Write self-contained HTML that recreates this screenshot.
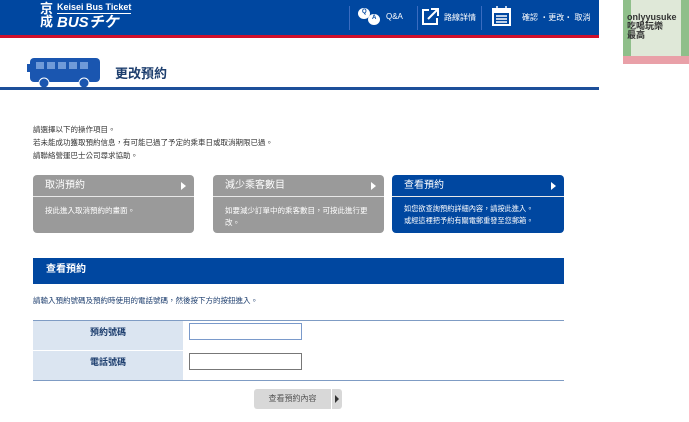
<!DOCTYPE html><html><head><meta charset="utf-8"><style>
body{margin:0;width:689px;height:422px;background:#fff;position:relative;overflow:hidden;font-family:"Liberation Sans","Noto Sans CJK TC",sans-serif;color:#333}
.a{position:absolute}
.hdr{left:0;top:0;width:599px;height:35px;background:#0047a0}
.red{left:0;top:35px;width:599px;height:3px;background:#d0102b}
.nav{color:#fff;font-size:8px}
.vl{width:1px;height:24px;top:6px;background:#3a6cc0}
.card{border-radius:4px;color:#fff;overflow:hidden}
.card .h{height:21px;border-bottom:1px solid #e8e8e8;font-size:10px;line-height:21px;padding-left:12px;position:relative}
.card .h:after{content:"";position:absolute;right:8px;top:7px;border-left:5px solid #fff;border-top:4px solid transparent;border-bottom:4px solid transparent}
.card .b{font-size:7.5px;padding:8px 12px;line-height:12px}
.g{background:#9a9a9a}.bl{background:#0047a0}
.lab{background:#dbe5f1;font-size:9px;font-weight:bold;color:#1d3e6e;text-align:center;box-sizing:border-box;padding-top:4px}
input{position:absolute;border:1px solid #777;height:15px;width:111px;padding:0;margin:0}
</style></head><body>
<div class="a hdr"></div><div class="a red"></div>
<div class="a" style="left:40px;top:2px;color:#fff;font-weight:bold;font-size:13px;line-height:13px">京<br>成</div>
<div class="a" style="left:57px;top:2px;color:#fff;font-size:9px;font-weight:bold;border-bottom:1px solid #fff;line-height:11px">Keisei Bus Ticket</div>
<div class="a" style="left:57px;top:15px;color:#fff;font-size:15px;font-weight:bold;font-style:italic;line-height:15px">BUSチケ</div>
<div class="a vl" style="left:349px"></div><div class="a vl" style="left:417px"></div><div class="a vl" style="left:481px"></div>
<div class="a" style="left:358px;top:8px;width:12px;height:11px;border-radius:50%;background:#fff"></div>
<div class="a" style="left:368px;top:14px;width:12px;height:11px;border-radius:50%;background:#fff"></div>
<div class="a" style="left:362px;top:9px;font-size:6px;font-weight:bold;color:#0047a0">Q</div>
<div class="a" style="left:372px;top:15px;font-size:6px;font-weight:bold;color:#0047a0">A</div>
<div class="a nav" style="left:386px;top:12px">Q&amp;A</div>
<svg class="a" style="left:420px;top:7px" width="20" height="20"><path d="M9 3H3v14h14v-6" fill="none" stroke="#fff" stroke-width="2"/><path d="M8 12L17 3M11 2h7v7" fill="none" stroke="#fff" stroke-width="2"/></svg>
<div class="a nav" style="left:444px;top:12px">路線詳情</div>
<svg class="a" style="left:492px;top:6px" width="19" height="20"><rect x="1" y="3" width="17" height="16" fill="none" stroke="#fff" stroke-width="2"/><rect x="1" y="3" width="17" height="4" fill="#fff"/><path d="M5 0v5M14 0v5M4 10h11M4 13h11M4 16h11" stroke="#fff" stroke-width="1.5"/></svg>
<div class="a nav" style="left:522px;top:12px">確認 ・更改・ 取消</div>
<div class="a" style="left:623px;top:0;width:66px;height:64px;background:#dfe8d8"></div>
<div class="a" style="left:623px;top:0;width:8px;height:64px;background:#8fbf8a"></div>
<div class="a" style="left:681px;top:0;width:8px;height:64px;background:#8fbf8a"></div>
<div class="a" style="left:623px;top:56px;width:66px;height:8px;background:#e9a0a8"></div>
<div class="a" style="left:627px;top:13px;font-size:9px;color:#333;line-height:9px;font-weight:bold">onlyyusuke<br>吃喝玩樂<br>最高</div>
<svg class="a" style="left:27px;top:56px" width="75" height="33"><rect x="3" y="2" width="70" height="24" rx="4" fill="#1a56b0"/><rect x="0" y="8" width="3" height="8" fill="#1a56b0"/><g fill="#6f9ad8"><rect x="9" y="6" width="8" height="7"/><rect x="20" y="6" width="8" height="7"/><rect x="31" y="6" width="8" height="7"/><rect x="42" y="6" width="8" height="7"/><rect x="53" y="6" width="8" height="7"/></g><circle cx="17" cy="27" r="5" fill="#1a56b0" stroke="#fff"/><circle cx="57" cy="27" r="5" fill="#1a56b0" stroke="#fff"/></svg>
<div class="a" style="left:115px;top:63px;font-size:13px;font-weight:bold;color:#1d3e6e">更改預約</div>
<div class="a" style="left:0;top:87px;width:599px;height:3px;background:#1d4f9a"></div>
<div class="a" style="left:33px;top:123px;font-size:7.5px;line-height:13px">請選擇以下的操作項目。<br>若未能成功獲取預約信息，有可能已過了予定的乘車日或取消期限已過。<br>請聯絡營運巴士公司尋求協助。</div>
<div class="a card g" style="left:33px;top:175px;width:161px;height:58px"><div class="h">取消預約</div><div class="b">按此進入取消預約的畫面。</div></div>
<div class="a card g" style="left:213px;top:175px;width:171px;height:58px"><div class="h">減少乘客數目</div><div class="b">如要減少訂單中的乘客數目，可按此進行更<br>改。</div></div>
<div class="a card bl" style="left:392px;top:175px;width:172px;height:58px"><div class="h">查看預約</div><div class="b" style="padding-top:6px;white-space:nowrap;font-size:7.2px">如您欲查詢預約詳細內容，請按此進入。<br>或經這裡把予約有關電郵重發至您郵箱。</div></div>
<div class="a" style="left:33px;top:258px;width:531px;height:26px;background:#0047a0;color:#fff;font-size:10px;font-weight:bold;line-height:24px;text-indent:13px">查看預約</div>
<div class="a" style="left:33px;top:295px;font-size:7.5px;color:#1d3e6e">請輸入預約號碼及預約時使用的電話號碼，然後按下方的按鈕進入。</div>
<div class="a" style="left:33px;top:320px;width:531px;height:1px;background:#7f9cc4"></div>
<div class="a lab" style="left:33px;top:321px;width:150px;height:29px">預約號碼</div>
<div class="a" style="left:33px;top:350px;width:531px;height:1px;background:#fff"></div>
<div class="a lab" style="left:33px;top:351px;width:150px;height:29px">電話號碼</div>
<div class="a" style="left:33px;top:380px;width:531px;height:1px;background:#7f9cc4"></div>
<input style="left:189px;top:323px;border-color:#7a9acb">
<input style="left:189px;top:353px">
<div class="a" style="left:254px;top:389px;width:88px;height:20px;background:#d8d8d8;border-radius:3px"></div>
<div class="a" style="left:255px;top:389px;width:75px;height:20px;font-size:8px;line-height:19px;text-align:center;color:#555">查看預約內容</div>
<div class="a" style="left:331px;top:389px;width:1px;height:20px;background:#fff"></div>
<div class="a" style="left:335px;top:395px;border-left:4px solid #333;border-top:4px solid transparent;border-bottom:4px solid transparent"></div>
</body></html>
